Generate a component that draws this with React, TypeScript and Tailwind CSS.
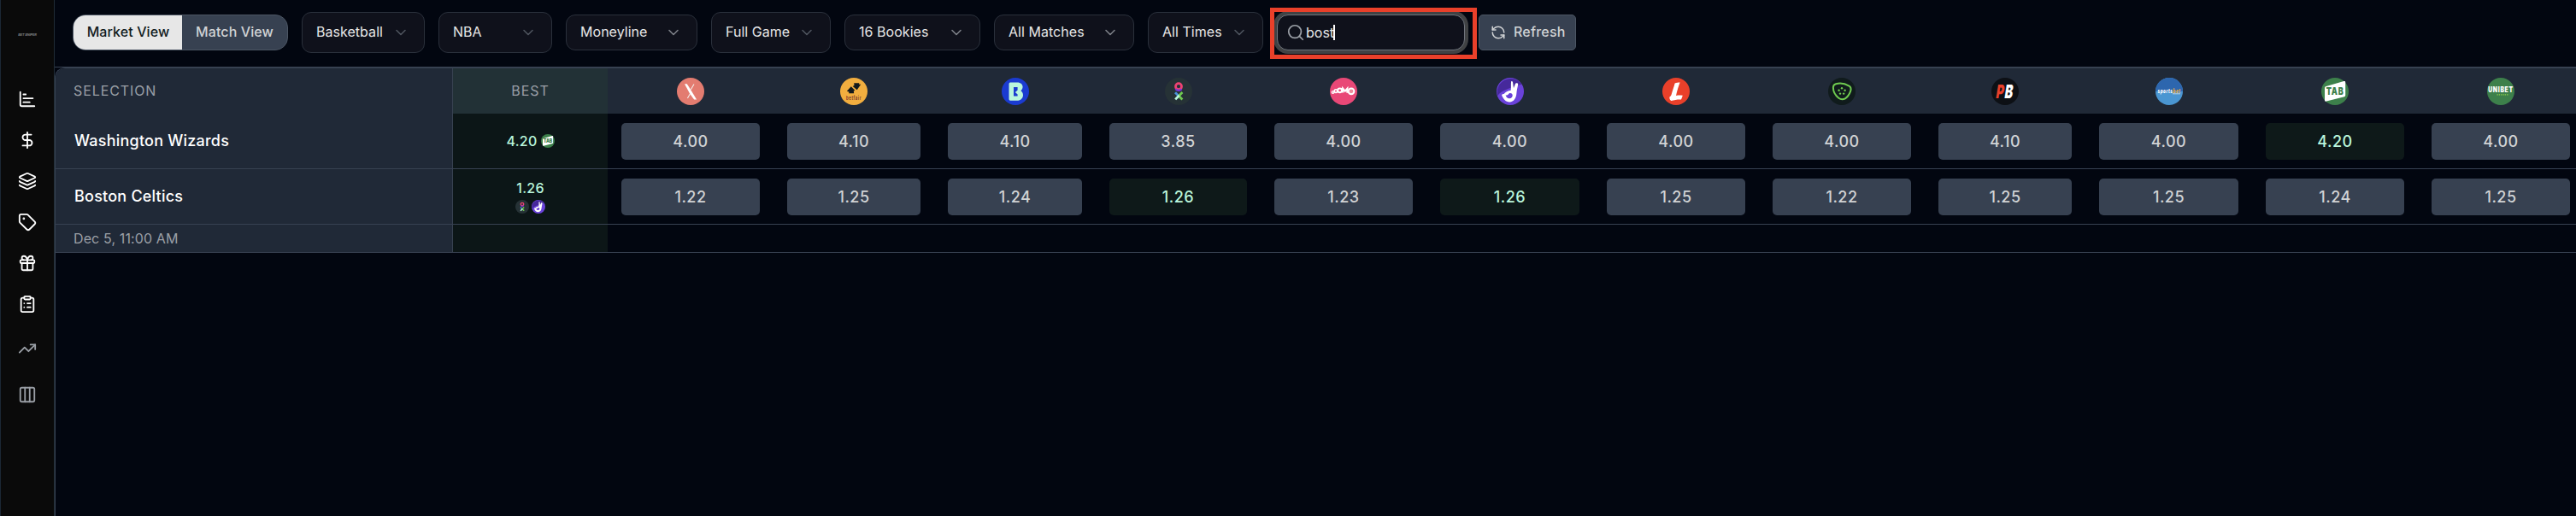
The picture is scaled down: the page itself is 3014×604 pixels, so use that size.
import React from "react";
import {
  ChartBar,
  ChevronDown,
  ClipboardList,
  Columns3,
  DollarSign,
  Gift,
  Layers,
  RefreshCcw,
  Search,
  Tag,
  TrendingUp,
} from "lucide-react";

const LOGO_FONT = "Inter, sans-serif";

type LogoProps = { className?: string };

function CrossLogo({ className }: LogoProps) {
  return (
    <svg viewBox="0 0 32 32" className={className}>
      <circle cx="16" cy="16" r="16" fill="#e37c70" />
      <path d="M9 7.2h2.800l4.600 7.400 6.700 10.800h-3L15 18.400z" fill="#fff" />
      <path d="M20 7.400l-3.600 6.400M15.600 18.400L12.400 24" stroke="#f3ece8" strokeWidth="1.100" fill="none" />
    </svg>
  );
}

function Betfair({ className }: LogoProps) {
  return (
    <svg viewBox="0 0 32 32" className={className}>
      <circle cx="16" cy="16" r="16" fill="#f2ae3f" />
      <path d="M12.800 10.300l4.500 4.500-1.500.8.4 2.600h-6l.2-1.800-2.600-.7z" fill="#13191c" />
      <path d="M16.200 6.200h6v1.600h2l-4.500 6.400-5-4.200 1.800-1z" fill="#13191c" />
      <text
        x="16"
        y="26.200"
        fontSize="6"
        fontWeight="700"
        fontFamily={LOGO_FONT}
        textAnchor="middle"
        textLength="18"
        lengthAdjust="spacingAndGlyphs"
        fill="#7d3a2c"
      >
        betfair
      </text>
    </svg>
  );
}

function Betr({ className }: LogoProps) {
  return (
    <svg viewBox="0 0 32 32" className={className}>
      <circle cx="16" cy="16" r="16" fill="#1b3bd0" />
      <path
        fillRule="evenodd"
        d="M10 5.400h9.600c3 .6 5 2.600 5 5.200 0 2.200-1 3.800-2.200 4.600 1.700 1 2.600 3 2.600 5 0 3.400-2.400 6-5.800 6.600H10c-1-.3-1.500-1-1.500-2V7.400c0-1 .5-1.700 1.500-2zM14 11v10.600h4.600v-2l-2.800-2.600 2.800-2.400V11z"
        fill="#baf6dc"
      />
    </svg>
  );
}

function Oxbet({ className }: LogoProps) {
  return (
    <svg viewBox="0 0 32 32" className={className}>
      <circle cx="16" cy="16" r="16" fill="#263236" />
      <circle cx="16" cy="10.200" r="3.500" fill="none" stroke="#ee4273" strokeWidth="2.800" />
      <path d="M12.400 13.200a4.900 4.900 0 0 0 7.200 0" fill="none" stroke="#7a35d8" strokeWidth="2.200" />
      <path d="M12 17.200l4 4.200" stroke="#4a93d8" strokeWidth="2.800" />
      <path d="M20.400 17l-4 4.200M16.400 21.400l4 4" stroke="#6fca50" strokeWidth="2.800" />
      <path d="M16.600 20.800l-4.400 4.600" stroke="#baf6dc" strokeWidth="2.800" />
    </svg>
  );
}

function Boomo({ className }: LogoProps) {
  return (
    <svg viewBox="0 0 32 32" className={className}>
      <circle cx="16" cy="16" r="16" fill="#e94877" />
      <g fill="none" stroke="#fff">
        <circle cx="3.600" cy="16.900" r="1.300" strokeWidth="1.400" />
        <circle cx="7" cy="15.600" r="1.800" strokeWidth="1.600" />
        <circle cx="11.600" cy="14.800" r="2.400" strokeWidth="2" />
        <path d="M15.200 17.600v-5l2.600 3 2.600-3v5.200" strokeWidth="2.200" />
        <circle cx="25" cy="15.800" r="3.400" strokeWidth="2" fill="#ee8a9a" />
      </g>
    </svg>
  );
}

function Dabble({ className }: LogoProps) {
  return (
    <svg viewBox="0 0 32 32" className={className}>
      <circle cx="16" cy="16" r="16" fill="#6a42da" />
      <path d="M1.200 21A16 16 0 0 1 29.600 7.600C22 10 6 14 1.200 21z" fill="#46299b" />
      <path
        fillRule="evenodd"
        d="M17.200 4.200c1.300-.8 1.900.6 2 2l.8 6 1.900-4.900c.6-1.500 3.600-1.300 3.300.5-.5 3.200-1.600 7-1.800 10.200-.3 5.800-3.200 10.400-8.200 10.400-4.700 0-6.700-3-8.800-7.100-.8-1.500.6-2.700 2.200-2.200 1.700-2.300 4.600-4 8.100-4.300.5-3.400-.2-7.800.5-10.600zM10.600 20.500c.8 2.200 2.200 3.700 4.400 3.700 2.400 0 4-1.800 3.700-4-.3-1.700-1.800-2.600-3.400-2.200-1 .4-1.300 1.400-2.200 2-.8.5-1.700.6-2.500.5z"
        fill="#fff"
      />
    </svg>
  );
}

function Ladbrokes({ className }: LogoProps) {
  return (
    <svg viewBox="0 0 32 32" className={className}>
      <circle cx="16" cy="16" r="16" fill="#e9402a" />
      <path
        d="M14.600 6.600c1.800-.8 4.200-1 6-1-1.400 3.700-3.500 9.800-4.600 15.400 2.500-.6 5-.6 7.800-.2-.6 1.800-1.100 3.200-1.800 4.700-3.500-.3-8 .4-11.600 1.600-1.500-.8-2.300-2.500-2-4.500 1-.6 1.600-1.300 2.100-2.600 1.300-4.600 3.100-9.400 4.100-13.400z"
        fill="#fff"
      />
    </svg>
  );
}

function Picklebet({ className }: LogoProps) {
  return (
    <svg viewBox="0 0 32 32" className={className}>
      <circle cx="16" cy="16" r="16" fill="#101b1c" />
      <path
        d="M9 7.300c4.500-1.400 10.500-.6 15.500 2.400 2.300 1.400 2.500 3.500 1.700 6-1.200 3.300-3.200 6.800-6.300 8.600-2.500 1.400-5.300 1.200-7.600-.6C8.600 20.800 5.800 16 5.900 11.300 6 9.200 7 7.900 9 7.300z"
        fill="none"
        stroke="#6fca50"
        strokeWidth="2"
      />
      <g fill="#6fca50">
        <circle cx="16" cy="12.200" r="1.200" />
        <circle cx="12.600" cy="14.800" r="1.200" />
        <circle cx="19.600" cy="14.800" r="1.200" />
        <circle cx="14" cy="18.600" r="1.200" />
        <circle cx="18.200" cy="18.600" r="1.200" />
      </g>
    </svg>
  );
}

function PlayersBet({ className }: LogoProps) {
  return (
    <svg viewBox="0 0 32 32" className={className}>
      <circle cx="16" cy="16" r="16" fill="#0d1015" />
      <g transform="skewX(-9)" fontFamily={LOGO_FONT} fontSize="22" fontWeight="900">
        <text x="8.600" y="24" textLength="9.600" lengthAdjust="spacingAndGlyphs" fill="#e9402a">
          P
        </text>
        <text x="18.600" y="24" textLength="10" lengthAdjust="spacingAndGlyphs" fill="#fff">
          B
        </text>
      </g>
    </svg>
  );
}

function Sportsbet({ className }: LogoProps) {
  return (
    <svg viewBox="0 0 32 32" className={className}>
      <circle cx="16" cy="16" r="16" fill="#4a96d2" />
      <path d="M0 16a16 16 0 0 1 32 0z" fill="#2d66ae" />
      <text
        x="2.500"
        y="17.600"
        fontFamily={LOGO_FONT}
        fontSize="7"
        fontWeight="800"
        fontStyle="italic"
        textLength="27"
        lengthAdjust="spacingAndGlyphs"
        fill="#fff"
      >
        sports<tspan fill="#f2ae3f">bet</tspan>
      </text>
      <path d="M20 18.800h9" stroke="#d9e4e8" strokeWidth="0.800" />
    </svg>
  );
}

function Tab({ className }: LogoProps) {
  return (
    <svg viewBox="0 0 32 32" className={className}>
      <circle cx="16" cy="16" r="16" fill="#3d804b" />
      <path
        d="M5.800 10l20.600-6c1-.3 1.800.2 1.800 1.200v15.200c0 .9-.4 1.500-1.300 1.800L6 27.600c-1.200.3-2-.2-2-1.400V12.200c0-1.200.6-1.900 1.800-2.200z"
        fill="#fff"
      />
      <text
        x="16.100"
        y="20.400"
        fontFamily={LOGO_FONT}
        fontSize="11.800"
        fontWeight="900"
        textAnchor="middle"
        textLength="20.500"
        lengthAdjust="spacingAndGlyphs"
        fill="#3d804b"
      >
        TAB
      </text>
    </svg>
  );
}

function Unibet({ className }: LogoProps) {
  return (
    <svg viewBox="0 0 32 32" className={className}>
      <circle cx="16" cy="16" r="16" fill="#3d804b" />
      <text
        x="16"
        y="16.600"
        fontFamily={LOGO_FONT}
        fontSize="8.600"
        fontWeight="900"
        textAnchor="middle"
        textLength="29.500"
        lengthAdjust="spacingAndGlyphs"
        fill="#fff"
      >
        UNIBET
      </text>
      <path d="M11.500 19.800h14" stroke="#8fd04c" strokeWidth="1.300" strokeDasharray="1.300 1" />
    </svg>
  );
}

const BOOKIES = [
  { name: "cross", Logo: CrossLogo, odds: ["4.00", "1.22"] },
  { name: "betfair", Logo: Betfair, odds: ["4.10", "1.25"] },
  { name: "betr", Logo: Betr, odds: ["4.10", "1.24"] },
  { name: "oxbet", Logo: Oxbet, odds: ["3.85", "1.26"] },
  { name: "boomo", Logo: Boomo, odds: ["4.00", "1.23"] },
  { name: "dabble", Logo: Dabble, odds: ["4.00", "1.26"] },
  { name: "ladbrokes", Logo: Ladbrokes, odds: ["4.00", "1.25"] },
  { name: "picklebet", Logo: Picklebet, odds: ["4.00", "1.22"] },
  { name: "playersbet", Logo: PlayersBet, odds: ["4.10", "1.25"] },
  { name: "sportsbet", Logo: Sportsbet, odds: ["4.00", "1.25"] },
  { name: "tab", Logo: Tab, odds: ["4.20", "1.24"] },
  { name: "unibet", Logo: Unibet, odds: ["4.00", "1.25"] },
];

const ROWS = [
  { team: "Washington Wizards", best: "4.20", bestLogos: [Tab] },
  { team: "Boston Celtics", best: "1.26", bestLogos: [Oxbet, Dabble] },
];

const GRID =
  "grid grid-cols-[465px_181px_194px_188px_189px_193px_194px_195px_194px_194px_188px_195px_194px_194px]";

const NAV = [
  { Icon: ChartBar, className: "h-12 text-white" },
  { Icon: DollarSign, className: "h-12 text-white" },
  { Icon: Layers, className: "h-12 text-white" },
  { Icon: Tag, className: "h-12 text-white" },
  { Icon: Gift, className: "h-12 text-white" },
  { Icon: ClipboardList, className: "h-12 text-white" },
  { Icon: TrendingUp, className: "mt-px h-[54px] text-[#9a9fa6]" },
  { Icon: Columns3, className: "h-[53px] text-[#9a9fa6]" },
];

const FILTERS = [
  { label: "Basketball", className: "h-12 w-36", chevron: "text-[#4f555f]" },
  { label: "NBA", className: "h-12 w-[133px]", chevron: "text-[#4f555f]" },
  { label: "Moneyline", className: "h-[42px] w-[154px]", chevron: "text-[#7d8188]" },
  { label: "Full Game", className: "h-12 w-[140px]", chevron: "text-[#4f555f]" },
  { label: "16 Bookies", className: "h-[42px] w-[159px]", chevron: "text-[#7d8188]" },
  { label: "All Matches", className: "h-[42px] w-[164px]", chevron: "text-[#7d8188]" },
  { label: "All Times", className: "h-12 w-[135px]", chevron: "text-[#4f555f]" },
];

function Sidebar() {
  return (
    <aside className="flex w-16 shrink-0 flex-col items-center border-l border-r border-l-[#1c2735] border-r-[#202c36] bg-[#0a0a0a]">
      <div className="flex h-[92px] items-start justify-center pt-[37px] text-[4px] leading-[8px] font-bold italic tracking-[-0.15px] whitespace-nowrap text-[#7c7f80]">
        BET SNIPER
      </div>
      {NAV.map(({ Icon, className }, i) => (
        <button key={i} className={`flex w-full shrink-0 items-center justify-center ${className}`}>
          <Icon size={22} strokeWidth={2} />
        </button>
      ))}
    </aside>
  );
}

function Toolbar() {
  return (
    <div className="flex h-[79px] shrink-0 items-center gap-4 border-b border-[#374151] pb-0.5 pl-[21px]">
      <div className="flex h-[42px] w-[252px] overflow-hidden rounded-[15px] border border-[#4b5563] bg-[#374151] text-base font-[450] tracking-[0.1px]">
        <div className="flex w-[127px] items-center justify-center bg-[#e7e7e7] pb-0.5 pl-px text-[#111b1d]">Market View</div>
        <div className="flex flex-1 items-center justify-center pb-0.5 text-[#d1d3d5]">Match View</div>
      </div>
      {FILTERS.map((f) => (
        <button
          key={f.label}
          className={`flex shrink-0 items-center justify-between rounded-[11px] border border-[#2a303b] bg-[#0f111b] pr-[17px] pl-4 text-base tracking-[0.04px] text-[#e7e7e7] ${f.className}`}
        >
          <span className="pb-0.5">{f.label}</span>
          <ChevronDown size={20} strokeWidth={1.9} className={f.chevron} />
        </button>
      ))}
      <div className="relative">
        <div className="flex h-[42px] w-[220px] items-center rounded-[13px] border border-[#6f747c] bg-[#0f111b] pl-2.5 text-base text-[#e7e7e7] ring-4 ring-[#404244]">
          <Search size={22} strokeWidth={1.9} className="text-[#9a9fa6]" />
          <span className="ml-px">bost</span>
          <span className="-ml-px h-[18px] w-0.5 bg-white" />
        </div>
        <div className="absolute -top-2 -left-2 h-[60px] w-[242px] border-5 border-[#e9402a]" />
      </div>
      <button className="flex h-[42px] w-[114px] items-center rounded-[5px] border border-[#4b5563] bg-[#374151] pl-[13px] text-base font-[450] tracking-[0.2px] text-[#d1d3d5]">
        <RefreshCcw size={18} strokeWidth={2} />
        <span className="ml-[9px] pb-0.5">Refresh</span>
      </button>
    </div>
  );
}

function OddsTable() {
  return (
    <div className="flex-1 overflow-hidden rounded-tl-[12px] border-t border-l border-[#374151]">
      <div className={`${GRID} h-[53px] bg-[#202937] text-base tracking-[0.9px] text-[#9a9fa6]`}>
        <div className="flex items-center border-r border-[#374151] pb-0.5 pl-[21px]">SELECTION</div>
        <div className="flex items-center justify-center bg-[#223136] pb-0.5">BEST</div>
        {BOOKIES.map(({ name, Logo }) => (
          <div key={name} className="flex items-center justify-center pt-px">
            <Logo className="size-8" />
          </div>
        ))}
      </div>
      {ROWS.map((row, r) => (
        <div key={row.team} className={`${GRID} h-[65px] border-b border-[#374151]`}>
          <div className="flex items-center border-r border-[#374151] bg-[#202937] pl-[22px] text-lg font-[450] tracking-[0.22px] text-white">
            {row.team}
          </div>
          <div
            className={`flex items-center justify-center bg-[#0c1617] text-base leading-5 font-medium text-[#baf6dc] ${
              row.bestLogos.length > 1 ? "flex-col gap-1" : "gap-1"
            }`}
          >
            <span className="tracking-[0.25px]">{row.best}</span>
            <span className="flex gap-[3px]">
              {row.bestLogos.map((Logo, i) => (
                <Logo key={i} className="size-4" />
              ))}
            </span>
          </div>
          {BOOKIES.map((b) => {
            const odds = b.odds[r];
            return (
              <div key={b.name} className="flex items-center px-4 pt-px">
                <div
                  className={`flex h-[43px] flex-1 items-center justify-center rounded-[5px] text-lg font-[450] tracking-[0.5px] ${
                    odds === row.best ? "bg-[#0e1919] text-[#baf6dc]" : "bg-[#374151] text-[#d1d3d5]"
                  }`}
                >
                  {odds}
                </div>
              </div>
            );
          })}
        </div>
      ))}
      <div className={`${GRID} h-[33px] border-b border-[#374151]`}>
        <div className="flex items-center border-r border-[#374151] bg-[#202937] pl-[21px] text-base tracking-[0.12px] text-[#9a9fa6]">
          Dec 5, 11:00 AM
        </div>
        <div className="bg-[#0c1617]" />
      </div>
    </div>
  );
}

export default function App() {
  return (
    <div className="flex h-[604px] w-full overflow-hidden bg-[#020610] font-['Inter',sans-serif]">
      <Sidebar />
      <main className="flex min-w-0 flex-1 flex-col">
        <Toolbar />
        <OddsTable />
      </main>
    </div>
  );
}
